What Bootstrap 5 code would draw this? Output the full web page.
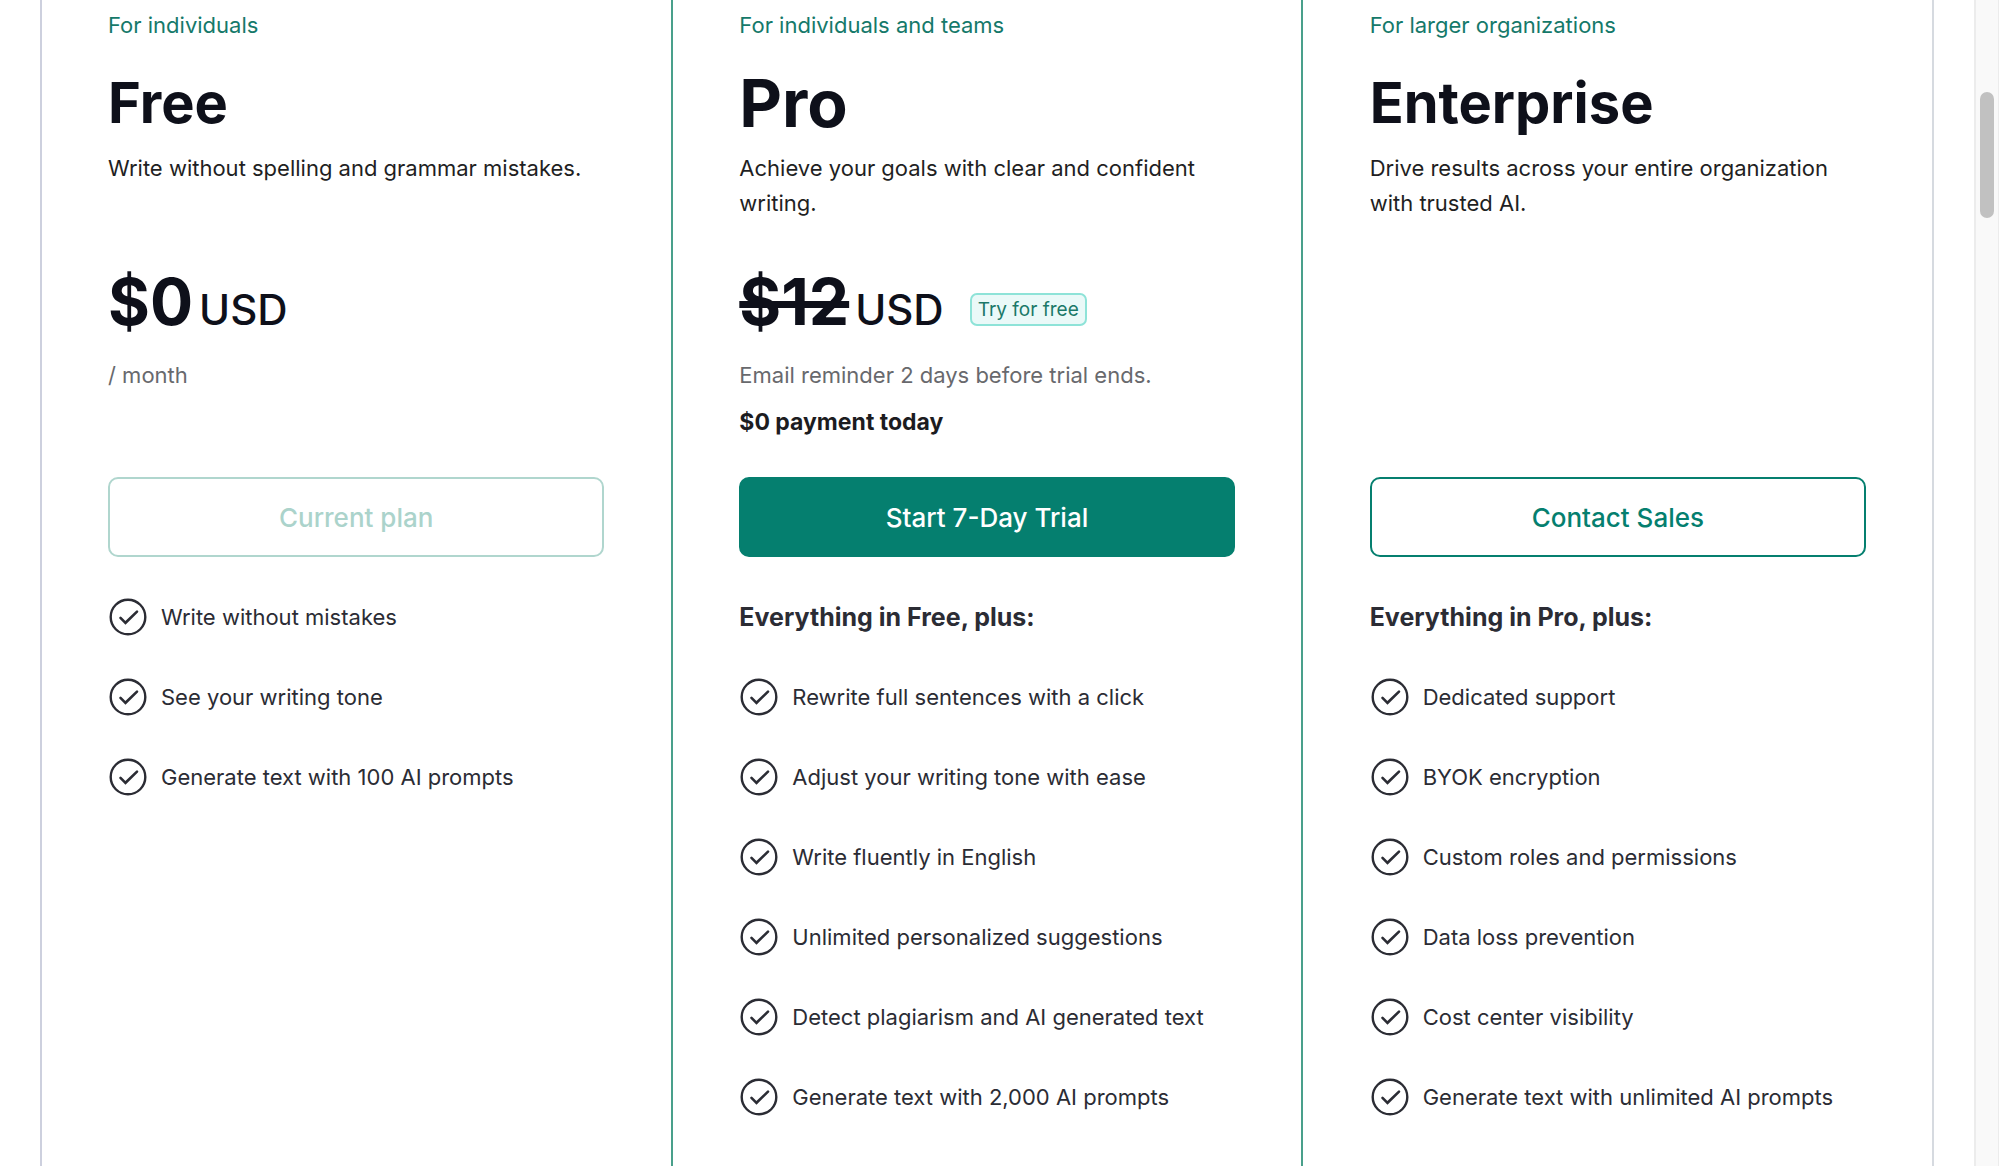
<!DOCTYPE html>
<html lang="en">
<head>
<meta charset="utf-8">
<meta name="viewport" content="width=device-width, initial-scale=1">
<title>Plans and pricing</title>
<link href="https://cdn.jsdelivr.net/npm/bootstrap@5.3.0/dist/css/bootstrap.min.css" rel="stylesheet">
<style>
  :root { --brand: #057f6f; --ink: #0e101a; --body-ink: #2b2c34; }
  body { font-family: Inter, "Noto Sans", sans-serif; font-size: 22px; line-height: 35px; color: var(--body-ink); }
  .page { height: 100vh; }
  .plans { margin: 0 40px; }
  .plan { padding: 8px 67px 28px; }
  .plan-first { border-left: 2px solid #cdd0de; padding-left: 66px; }
  .plan-main { border: solid #49a08b; border-width: 0 2px; padding: 8px 66px 28px; }
  .plan-last { border-right: 2px solid #d6dae0; padding-right: 66px; }
  .tagline { color: #15796a; margin-bottom: 20px; }
  .plan-name { font-size: 56px; line-height: 80px; font-weight: 700; color: var(--ink); margin-bottom: 8px; }
  .plan-main .plan-name { font-size: 66px; }
  .summary { min-height: 70px; color: #1f1f23; margin-bottom: 41px; }
  .price { height: 80px; line-height: 80px; color: var(--ink); margin-bottom: 16px; }
  .amount { font-size: 64px; font-weight: 700; }
  .amount s { text-decoration-thickness: 7px; }
  .unit { font-size: 42px; font-weight: 500; margin-left: 6px; }
  .trial-tag { font-size: 19px; line-height: 29px; font-weight: 400; color: #1b7868; background: #eaf9f8; border: 2px solid #8ee3d8; border-radius: 7px; padding: 0 6px; margin: 14px 0 0 26px; }
  .terms { min-height: 82px; margin-bottom: 37px; color: #68696d; }
  .terms strong { display: block; margin-top: 12px; color: #1c1c1f; font-size: 23px; font-weight: 700; }
  .plan-btn { height: 80px; font-size: 26px; font-weight: 500; border: 2px solid var(--brand); border-radius: 10px; color: var(--brand); background: #fff; margin-bottom: 20px; }
  .plan-btn:hover { color: #fff; background: #046a5d; border-color: #046a5d; }
  .plan-btn.solid { color: #fff; background: var(--brand); }
  .plan-btn:disabled { color: #abd3cb; background: #fff; border-color: #b0d6ce; opacity: 1; }
  .features li { min-height: 80px; }
  .features-title { font-size: 25px; font-weight: 700; line-height: 80px; margin: 0; }
  .tick { width: 40px; height: 40px; margin-right: 13px; flex: none; }
  .scroll-track { width: 25px; background: #f9f9f9; border: solid #ececec; border-width: 0 1px 0 2px; padding-top: 92px; }
  .scroll-thumb { width: 14px; height: 126px; border-radius: 7px; background: #c1c1c1; }
</style>
<script src="https://cdn.jsdelivr.net/npm/bootstrap@5.3.0/dist/js/bootstrap.bundle.min.js"></script>
</head>
<body>
<svg class="d-none" aria-hidden="true">
  <symbol id="tick" viewBox="0 0 40 40">
    <circle cx="20" cy="20" r="17.3" fill="none" stroke="currentColor" stroke-width="2.4"/>
    <path d="M12.5 20.8l5 5L29 14.6" fill="none" stroke="currentColor" stroke-width="2.6" stroke-linecap="round" stroke-linejoin="miter"/>
  </symbol>
</svg>
<div class="page d-flex overflow-hidden">
  <main class="flex-grow-1 d-flex">
    <div class="plans row g-0 flex-grow-1">
      <section class="plan plan-first col-4">
        <p class="tagline">For individuals</p>
        <h2 class="plan-name">Free</h2>
        <p class="summary">Write without spelling and grammar mistakes.</p>
        <div class="price d-flex align-items-baseline"><span class="amount">$0</span><span class="unit">USD</span></div>
        <div class="terms">/ month</div>
        <button type="button" class="plan-btn btn w-100" disabled>Current plan</button>
        <ul class="features list-unstyled mb-0">
          <li class="d-flex align-items-center"><svg class="tick"><use href="#tick"/></svg>Write without mistakes</li>
          <li class="d-flex align-items-center"><svg class="tick"><use href="#tick"/></svg>See your writing tone</li>
          <li class="d-flex align-items-center"><svg class="tick"><use href="#tick"/></svg>Generate text with 100 AI prompts</li>
        </ul>
      </section>
      <section class="plan plan-main col-4">
        <p class="tagline">For individuals and teams</p>
        <h2 class="plan-name">Pro</h2>
        <p class="summary">Achieve your goals with clear and confident writing.</p>
        <div class="price d-flex align-items-baseline"><span class="amount"><s>$12</s></span><span class="unit">USD</span><span class="trial-tag align-self-center">Try for free</span></div>
        <div class="terms">Email reminder 2 days before trial ends.<strong>$0 payment today</strong></div>
        <button type="button" class="plan-btn solid btn w-100">Start 7-Day Trial</button>
        <h3 class="features-title">Everything in Free, plus:</h3>
        <ul class="features list-unstyled mb-0">
          <li class="d-flex align-items-center"><svg class="tick"><use href="#tick"/></svg>Rewrite full sentences with a click</li>
          <li class="d-flex align-items-center"><svg class="tick"><use href="#tick"/></svg>Adjust your writing tone with ease</li>
          <li class="d-flex align-items-center"><svg class="tick"><use href="#tick"/></svg>Write fluently in English</li>
          <li class="d-flex align-items-center"><svg class="tick"><use href="#tick"/></svg>Unlimited personalized suggestions</li>
          <li class="d-flex align-items-center"><svg class="tick"><use href="#tick"/></svg>Detect plagiarism and AI generated text</li>
          <li class="d-flex align-items-center"><svg class="tick"><use href="#tick"/></svg>Generate text with 2,000 AI prompts</li>
        </ul>
      </section>
      <section class="plan plan-last col-4">
        <p class="tagline">For larger organizations</p>
        <h2 class="plan-name">Enterprise</h2>
        <p class="summary">Drive results across your entire organization with trusted AI.</p>
        <div class="price"></div>
        <div class="terms"></div>
        <button type="button" class="plan-btn btn w-100">Contact Sales</button>
        <h3 class="features-title">Everything in Pro, plus:</h3>
        <ul class="features list-unstyled mb-0">
          <li class="d-flex align-items-center"><svg class="tick"><use href="#tick"/></svg>Dedicated support</li>
          <li class="d-flex align-items-center"><svg class="tick"><use href="#tick"/></svg>BYOK encryption</li>
          <li class="d-flex align-items-center"><svg class="tick"><use href="#tick"/></svg>Custom roles and permissions</li>
          <li class="d-flex align-items-center"><svg class="tick"><use href="#tick"/></svg>Data loss prevention</li>
          <li class="d-flex align-items-center"><svg class="tick"><use href="#tick"/></svg>Cost center visibility</li>
          <li class="d-flex align-items-center"><svg class="tick"><use href="#tick"/></svg>Generate text with unlimited AI prompts</li>
        </ul>
      </section>
    </div>
  </main>
  <div class="scroll-track d-flex justify-content-center flex-shrink-0" aria-hidden="true"><div class="scroll-thumb"></div></div>
</div>
</body>
</html>
